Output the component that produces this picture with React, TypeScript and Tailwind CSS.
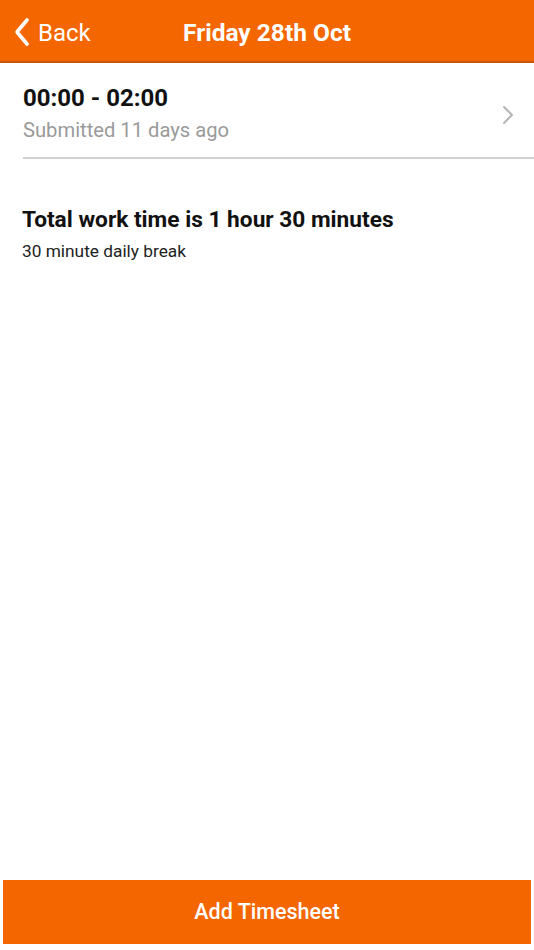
import React from "react";

export default function App() {
  return (
    <div className="w-[534px] h-[950px] bg-white flex flex-col" style={{ fontFamily: "Roboto, 'Noto Sans', sans-serif" }}>
      <header className="h-[63px] bg-[#f46600] border-b-2 border-[#c8560a] flex items-center relative shrink-0 pt-[5px]">
        <div className="flex items-center pl-[12px] text-white">
          <svg width="22" height="30" viewBox="0 0 22 30" className="mr-[4px] -mt-[2px]">
            <path d="M15 3 L5 15 L15 27" stroke="white" strokeWidth="3.6" fill="none" strokeLinecap="round" strokeLinejoin="round" />
          </svg>
          <span className="text-[24px] leading-none">Back</span>
        </div>
        <div className="absolute left-0 right-0 text-center text-white font-bold text-[24.5px] leading-none pointer-events-none">
          Friday 28th Oct
        </div>
      </header>

      <div className="pl-[23px] pt-[21px] flex">
        <div className="flex-1 border-b-2 border-[#d0d0d0] pb-[14px] flex items-center">
          <div className="flex-1">
            <div className="text-[24px] font-bold text-[#111] leading-[28px]">00:00 - 02:00</div>
            <div className="text-[20.2px] text-[#9a9a9a] leading-[26px] mt-[5px]">Submitted 11 days ago</div>
          </div>
          <svg width="14" height="22" viewBox="0 0 14 22" className="mr-[19px] mt-[2px]">
            <path d="M3 3 L11 11 L3 19" stroke="#b5b5b5" strokeWidth="2" fill="none" strokeLinecap="round" strokeLinejoin="round" />
          </svg>
        </div>
      </div>

      <div className="pl-[22px] pt-[47px]">
        <div className="text-[22.7px] font-bold text-[#111] leading-[28px]">Total work time is 1 hour 30 minutes</div>
        <div className="text-[17.3px] text-[#222] leading-[22px] mt-[6px]">30 minute daily break</div>
      </div>

      <div className="flex-1" />

      <div className="px-[3px] pb-[6px]">
        <button className="w-full h-[64px] bg-[#f46600] text-white text-[21.5px] font-medium flex items-center justify-center">
          Add Timesheet
        </button>
      </div>
    </div>
  );
}
